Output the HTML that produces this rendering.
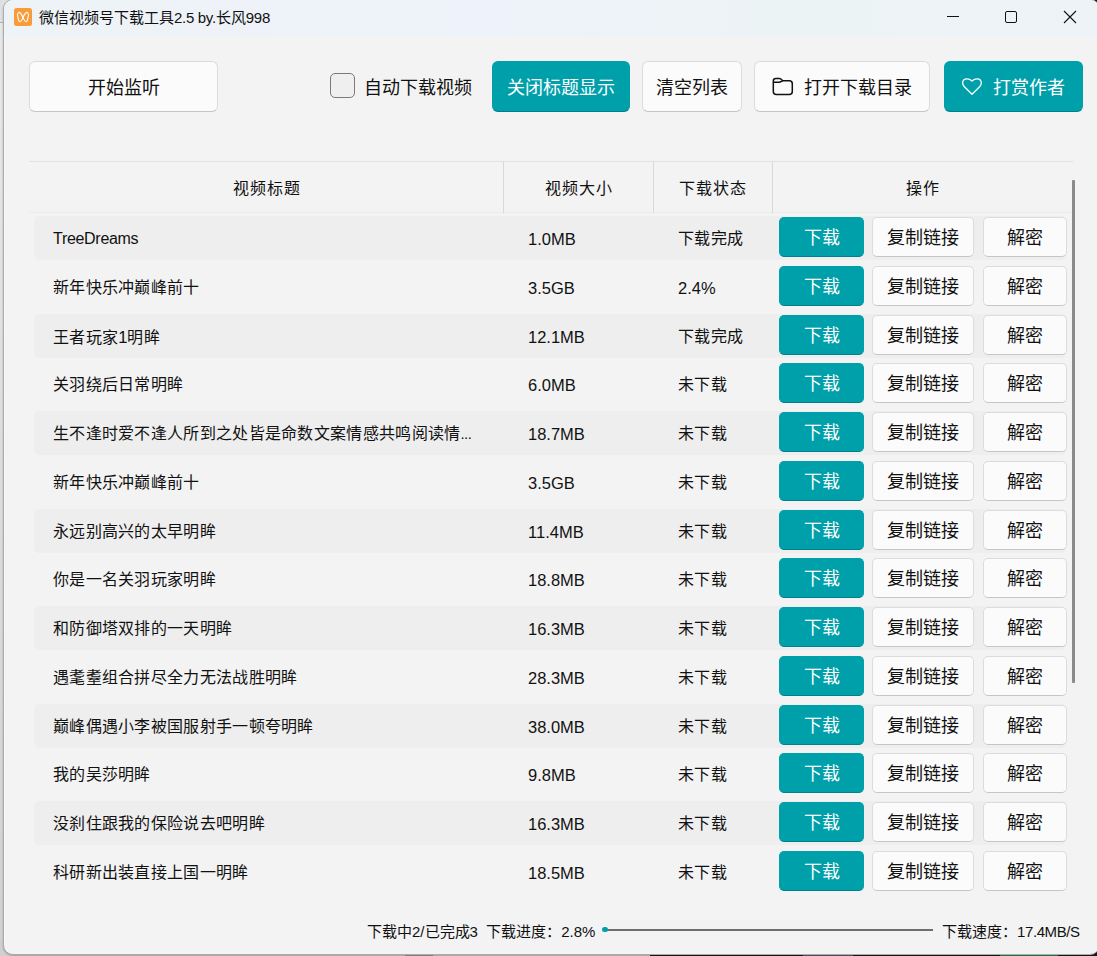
<!DOCTYPE html>
<html lang="zh-CN">
<head>
<meta charset="utf-8">
<style>
html,body{margin:0;padding:0;width:1097px;height:956px;overflow:hidden;background:#1c1c1c;font-family:"Liberation Sans",sans-serif;color:#111}
.abs{position:absolute}
#desk-l{position:absolute;left:0;top:0;width:12px;height:22px;background:#dfe0e2}
#desk-l2{position:absolute;left:0;top:22px;width:12px;height:934px;background:linear-gradient(#e8e8e8,#d2d2d2);border-top:1px solid #aab2ba;box-sizing:border-box}
#desk-b{position:absolute;left:0;top:940px;width:650px;height:16px;background:#d0d0d0}
#win{position:absolute;left:3px;top:-1px;width:1097px;height:956px;background:#f3f3f3;border:1px solid #acacac;border-radius:10px;overflow:hidden;box-sizing:border-box;box-shadow:0 1px 2px rgba(0,0,0,.25), inset 1px 0 0 #f8f8f8}
#title{position:absolute;left:0;top:0;width:100%;height:36px;background:linear-gradient(90deg,#eef3f7 0%,#eef2f9 35%,#eef2fa 45%,#ecf3f5 70%,#edf3f6 100%)}
.btn{position:absolute;box-sizing:border-box;border-radius:6px;background:#fbfbfb;border:1px solid #dcdcdc;border-bottom-color:#c6c6c6;font-size:18px;display:flex;align-items:center;justify-content:center;color:#111;padding-bottom:2px}
.teal{position:absolute;box-sizing:border-box;border-radius:6px;background:#00a0ab;border:1px solid #00a0ab;border-bottom-color:#00808a;color:#fff;font-size:18px;font-weight:300;display:flex;align-items:center;justify-content:center;padding-bottom:2px}
.hdr{position:absolute;top:162px;height:50px;font-size:16px;display:flex;align-items:center;justify-content:center;letter-spacing:1px;padding-left:1px;box-sizing:border-box}
.row{position:absolute;left:34px;width:1032px;height:44px;border-radius:5px;background:#eeeeee}
.cell{position:absolute;font-size:16px;white-space:nowrap;line-height:22px;letter-spacing:0.3px}
.l{font-size:16.5px;letter-spacing:0}
.sb{height:40px;border-radius:5px;padding-bottom:2px}
.sm{font-size:15px;line-height:20px;white-space:nowrap}
</style>
</head>
<body>
<div id="desk-l"></div>
<div id="desk-l2"></div>
<div id="desk-b"></div>
<div class="abs" style="left:405px;top:953px;width:28px;height:3px;background:#9a9a9a"></div>
<div class="abs" style="left:803px;top:953px;width:50px;height:3px;background:#5c5a78"></div>
<div class="abs" style="left:1000px;top:953px;width:58px;height:3px;background:#1e8f5a"></div>
<div id="win">
  <div id="title"></div>
</div>
<!-- title bar -->
<svg class="abs" style="left:14px;top:8px" width="18" height="18" viewBox="0 0 18 18">
<rect x="0" y="0" width="18" height="18" rx="2.5" fill="#f89c3b"/>
<path d="M4.4 4.6C5.6 3.6 7.6 6.2 9 9.5C7.9 11.5 7.4 13.9 5.9 13.8C4.6 13.7 4 10 3.6 7.6C3.4 6.2 3.7 5.1 4.4 4.6Z" fill="none" stroke="#fff" stroke-width="1.1"/>
<path d="M13.6 4.6C12.4 3.6 10.4 6.2 9 9.5C10.1 11.5 10.6 13.9 12.1 13.8C13.4 13.7 14 10 14.4 7.6C14.6 6.2 14.3 5.1 13.6 4.6Z" fill="none" stroke="#fff" stroke-width="1.1"/>
</svg>
<div class="abs sm" style="left:39px;top:7.5px">微信视频号下载工具<span style="letter-spacing:-0.3px">2.5 by.</span>长风<span style="letter-spacing:-0.3px">998</span></div>
<div class="abs" style="left:947px;top:16px;width:12px;height:1px;background:#111"></div>
<div class="abs" style="left:1005px;top:11px;width:12px;height:12px;border:1px solid #111;border-radius:2px;box-sizing:border-box"></div>
<svg class="abs" style="left:1063px;top:10px" width="14" height="14" viewBox="0 0 14 14"><path d="M1 1L13 13M13 1L1 13" stroke="#111" stroke-width="1.1"/></svg>

<!-- toolbar -->
<div class="btn" style="left:29px;top:61px;width:189px;height:51px">开始监听</div>
<div class="abs" style="left:330px;top:73px;width:25px;height:25px;box-sizing:border-box;border:1px solid #7a7a7a;border-radius:5px;background:#efefef"></div>
<div class="abs" style="left:364px;top:76px;font-size:18px;line-height:24px">自动下载视频</div>
<div class="teal" style="left:492px;top:61px;width:138px;height:51px">关闭标题显示</div>
<div class="btn" style="left:642px;top:61px;width:100px;height:51px">清空列表</div>
<div class="btn" style="left:754px;top:61px;width:176px;height:51px;justify-content:flex-start;padding-left:49px">打开下载目录</div>
<svg class="abs" style="left:768px;top:74px" width="30" height="25" viewBox="0 0 30 25"><path d="M5.3 10V17.5Q5.3 20.5 8.3 20.5H21.3Q24.3 20.5 24.3 17.5V9.7Q24.3 6.7 21.3 6.7H14.8L12.9 5Q12.3 4.4 11.3 4.4H7.8Q5.3 4.4 5.3 6.9Z M5.3 8.2H11.3Q12.3 8.2 12.9 7.6L14.8 6.7" fill="none" stroke="#111" stroke-width="1.5" stroke-linejoin="round"/></svg>
<div class="teal" style="left:944px;top:61px;width:139px;height:51px;justify-content:flex-start;padding-left:48px">打赏作者</div>
<svg class="abs" style="left:956px;top:74px" width="30" height="25" viewBox="0 0 30 25"><path d="M16 20.2L8.4 12.7Q6.6 10.9 6.6 9Q6.6 4.8 11 4.8Q13.7 4.8 16 7Q18.3 4.8 21 4.8Q25.3 4.8 25.3 9Q25.3 10.9 23.6 12.7Z" fill="none" stroke="#fff" stroke-width="1.3" stroke-linejoin="round"/></svg>

<!-- table header -->
<div class="abs" style="left:29px;top:161px;width:1044px;height:1px;background:#e2e2e2"></div>
<div class="abs" style="left:29px;top:212px;width:1042px;height:1px;background:#ebebeb"></div>
<div class="abs" style="left:503px;top:161px;width:1px;height:52px;background:#d9d9d9"></div>
<div class="abs" style="left:653px;top:161px;width:1px;height:52px;background:#d9d9d9"></div>
<div class="abs" style="left:772px;top:161px;width:1px;height:52px;background:#d9d9d9"></div>
<div class="hdr" style="left:29px;width:474px">视频标题</div>
<div class="hdr" style="left:503px;width:150px">视频大小</div>
<div class="hdr" style="left:653px;width:119px">下载状态</div>
<div class="hdr" style="left:772px;width:301px">操作</div>

<div class="row" style="top:216.0px"></div>
<div class="row" style="top:313.5px"></div>
<div class="row" style="top:411.0px"></div>
<div class="row" style="top:508.5px"></div>
<div class="row" style="top:606.0px"></div>
<div class="row" style="top:703.5px"></div>
<div class="row" style="top:801.0px"></div>
<div class="cell" style="left:53px;top:228.0px"><span class="l" style="font-size:16px;letter-spacing:-0.3px">TreeDreams</span></div>
<div class="cell" style="left:528px;top:228.0px"><span class="l">1.0MB</span></div>
<div class="cell" style="left:678px;top:228.0px">下载完成</div>
<div class="teal sb" style="left:779px;top:217.0px;width:85px">下载</div>
<div class="btn sb" style="left:872px;top:217.0px;width:102px">复制链接</div>
<div class="btn sb" style="left:982.5px;top:217.0px;width:84px">解密</div>
<div class="cell" style="left:53px;top:276.8px">新年快乐冲巅峰前十</div>
<div class="cell" style="left:528px;top:276.8px"><span class="l">3.5GB</span></div>
<div class="cell" style="left:678px;top:276.8px"><span class="l">2.4%</span></div>
<div class="teal sb" style="left:779px;top:265.8px;width:85px">下载</div>
<div class="btn sb" style="left:872px;top:265.8px;width:102px">复制链接</div>
<div class="btn sb" style="left:982.5px;top:265.8px;width:84px">解密</div>
<div class="cell" style="left:53px;top:325.5px">王者玩家<span class="l">1</span>明眸</div>
<div class="cell" style="left:528px;top:325.5px"><span class="l">12.1MB</span></div>
<div class="cell" style="left:678px;top:325.5px">下载完成</div>
<div class="teal sb" style="left:779px;top:314.5px;width:85px">下载</div>
<div class="btn sb" style="left:872px;top:314.5px;width:102px">复制链接</div>
<div class="btn sb" style="left:982.5px;top:314.5px;width:84px">解密</div>
<div class="cell" style="left:53px;top:374.2px">关羽绕后日常明眸</div>
<div class="cell" style="left:528px;top:374.2px"><span class="l">6.0MB</span></div>
<div class="cell" style="left:678px;top:374.2px">未下载</div>
<div class="teal sb" style="left:779px;top:363.2px;width:85px">下载</div>
<div class="btn sb" style="left:872px;top:363.2px;width:102px">复制链接</div>
<div class="btn sb" style="left:982.5px;top:363.2px;width:84px">解密</div>
<div class="cell" style="left:53px;top:423.0px">生不逢时爱不逢人所到之处皆是命数文案情感共鸣阅读情<span style="font-size:15px;letter-spacing:-0.6px">...</span></div>
<div class="cell" style="left:528px;top:423.0px"><span class="l">18.7MB</span></div>
<div class="cell" style="left:678px;top:423.0px">未下载</div>
<div class="teal sb" style="left:779px;top:412.0px;width:85px">下载</div>
<div class="btn sb" style="left:872px;top:412.0px;width:102px">复制链接</div>
<div class="btn sb" style="left:982.5px;top:412.0px;width:84px">解密</div>
<div class="cell" style="left:53px;top:471.8px">新年快乐冲巅峰前十</div>
<div class="cell" style="left:528px;top:471.8px"><span class="l">3.5GB</span></div>
<div class="cell" style="left:678px;top:471.8px">未下载</div>
<div class="teal sb" style="left:779px;top:460.8px;width:85px">下载</div>
<div class="btn sb" style="left:872px;top:460.8px;width:102px">复制链接</div>
<div class="btn sb" style="left:982.5px;top:460.8px;width:84px">解密</div>
<div class="cell" style="left:53px;top:520.5px">永远别高兴的太早明眸</div>
<div class="cell" style="left:528px;top:520.5px"><span class="l">11.4MB</span></div>
<div class="cell" style="left:678px;top:520.5px">未下载</div>
<div class="teal sb" style="left:779px;top:509.5px;width:85px">下载</div>
<div class="btn sb" style="left:872px;top:509.5px;width:102px">复制链接</div>
<div class="btn sb" style="left:982.5px;top:509.5px;width:84px">解密</div>
<div class="cell" style="left:53px;top:569.2px">你是一名关羽玩家明眸</div>
<div class="cell" style="left:528px;top:569.2px"><span class="l">18.8MB</span></div>
<div class="cell" style="left:678px;top:569.2px">未下载</div>
<div class="teal sb" style="left:779px;top:558.2px;width:85px">下载</div>
<div class="btn sb" style="left:872px;top:558.2px;width:102px">复制链接</div>
<div class="btn sb" style="left:982.5px;top:558.2px;width:84px">解密</div>
<div class="cell" style="left:53px;top:618.0px">和防御塔双排的一天明眸</div>
<div class="cell" style="left:528px;top:618.0px"><span class="l">16.3MB</span></div>
<div class="cell" style="left:678px;top:618.0px">未下载</div>
<div class="teal sb" style="left:779px;top:607.0px;width:85px">下载</div>
<div class="btn sb" style="left:872px;top:607.0px;width:102px">复制链接</div>
<div class="btn sb" style="left:982.5px;top:607.0px;width:84px">解密</div>
<div class="cell" style="left:53px;top:666.8px">遇耄耋组合拼尽全力无法战胜明眸</div>
<div class="cell" style="left:528px;top:666.8px"><span class="l">28.3MB</span></div>
<div class="cell" style="left:678px;top:666.8px">未下载</div>
<div class="teal sb" style="left:779px;top:655.8px;width:85px">下载</div>
<div class="btn sb" style="left:872px;top:655.8px;width:102px">复制链接</div>
<div class="btn sb" style="left:982.5px;top:655.8px;width:84px">解密</div>
<div class="cell" style="left:53px;top:715.5px">巅峰偶遇小李被国服射手一顿夸明眸</div>
<div class="cell" style="left:528px;top:715.5px"><span class="l">38.0MB</span></div>
<div class="cell" style="left:678px;top:715.5px">未下载</div>
<div class="teal sb" style="left:779px;top:704.5px;width:85px">下载</div>
<div class="btn sb" style="left:872px;top:704.5px;width:102px">复制链接</div>
<div class="btn sb" style="left:982.5px;top:704.5px;width:84px">解密</div>
<div class="cell" style="left:53px;top:764.2px">我的吴莎明眸</div>
<div class="cell" style="left:528px;top:764.2px"><span class="l">9.8MB</span></div>
<div class="cell" style="left:678px;top:764.2px">未下载</div>
<div class="teal sb" style="left:779px;top:753.2px;width:85px">下载</div>
<div class="btn sb" style="left:872px;top:753.2px;width:102px">复制链接</div>
<div class="btn sb" style="left:982.5px;top:753.2px;width:84px">解密</div>
<div class="cell" style="left:53px;top:813.0px">没刹住跟我的保险说去吧明眸</div>
<div class="cell" style="left:528px;top:813.0px"><span class="l">16.3MB</span></div>
<div class="cell" style="left:678px;top:813.0px">未下载</div>
<div class="teal sb" style="left:779px;top:802.0px;width:85px">下载</div>
<div class="btn sb" style="left:872px;top:802.0px;width:102px">复制链接</div>
<div class="btn sb" style="left:982.5px;top:802.0px;width:84px">解密</div>
<div class="cell" style="left:53px;top:861.8px">科研新出装直接上国一明眸</div>
<div class="cell" style="left:528px;top:861.8px"><span class="l">18.5MB</span></div>
<div class="cell" style="left:678px;top:861.8px">未下载</div>
<div class="teal sb" style="left:779px;top:850.8px;width:85px">下载</div>
<div class="btn sb" style="left:872px;top:850.8px;width:102px">复制链接</div>
<div class="btn sb" style="left:982.5px;top:850.8px;width:84px">解密</div>

<div class="abs" style="left:1072px;top:180px;width:3px;height:503px;background:#8a8a8a;border-radius:1px"></div>

<!-- footer -->
<div class="abs sm" style="left:367px;top:922px">下载中2/已完成3&nbsp;&nbsp;下载进度：2.8%</div>
<div class="abs" style="left:605px;top:929px;width:328px;height:1.5px;background:#6e6e6e"></div>
<div class="abs" style="left:602px;top:927px;width:6px;height:5px;border-radius:2.5px;background:#00a0ab"></div>
<div class="abs sm" style="left:942px;top:922px">下载速度：<span style="letter-spacing:-0.4px">17.4MB/S</span></div>
</body>
</html>
